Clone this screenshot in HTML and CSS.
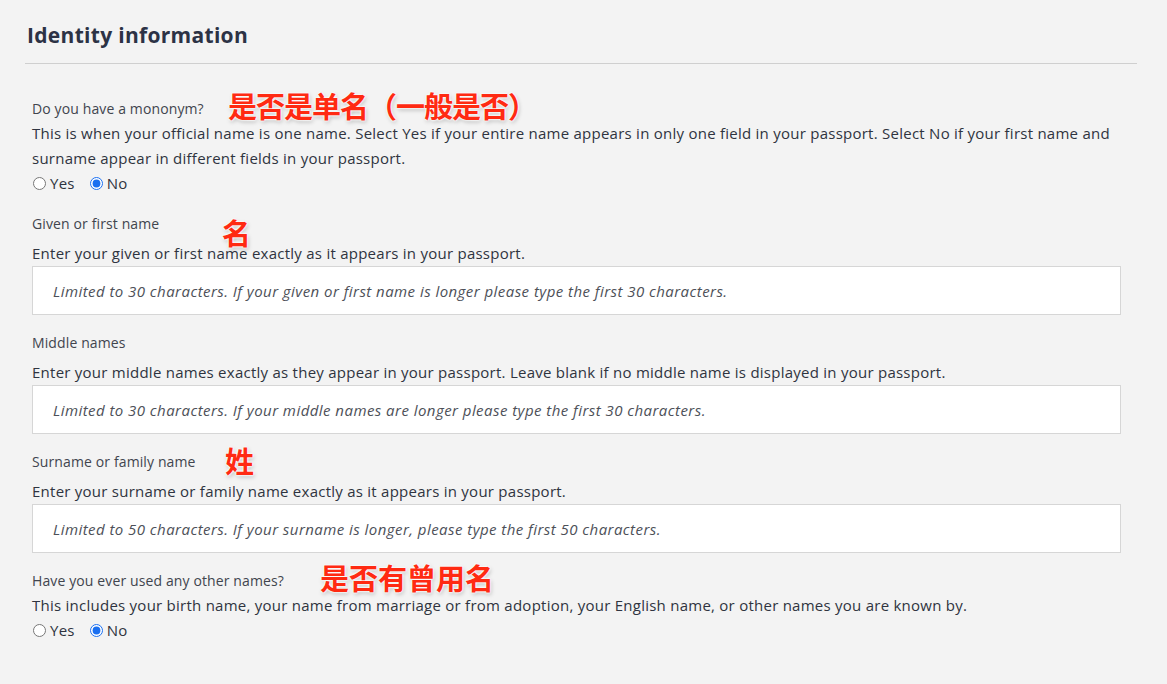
FILE: index.html
```html
<!DOCTYPE html>
<html lang="en">
<head>
<meta charset="utf-8">
<title>Identity information</title>
<link rel="stylesheet" href="styles.css">
</head>
<body>
<section class="panel">
  <h2 class="panel-title">Identity information</h2>
  <div class="fields">
    <div class="group">
      <div class="label">Do you have a mononym?</div>
      <span class="note note-1">是否是单名（一般是否）</span>
      <p class="desc">This is when your official name is one name. Select Yes if your entire name appears in only one field in your passport. Select No if your first name and surname appear in different fields in your passport.</p>
      <div class="radios">
        <label class="radio"><input type="radio" name="mono"> Yes</label>
        <label class="radio"><input type="radio" name="mono" checked> No</label>
      </div>
    </div>
    <div class="group">
      <div class="label label-gap">Given or first name</div>
      <span class="note note-2">名</span>
      <p class="desc">Enter your given or first name exactly as it appears in your passport.</p>
      <input class="text" type="text" placeholder="Limited to 30 characters. If your given or first name is longer please type the first 30 characters.">
    </div>
    <div class="group">
      <div class="label label-gap">Middle names</div>
      <p class="desc">Enter your middle names exactly as they appear in your passport. Leave blank if no middle name is displayed in your passport.</p>
      <input class="text" type="text" placeholder="Limited to 30 characters. If your middle names are longer please type the first 30 characters.">
    </div>
    <div class="group">
      <div class="label label-gap">Surname or family name</div>
      <span class="note note-3">姓</span>
      <p class="desc">Enter your surname or family name exactly as it appears in your passport.</p>
      <input class="text" type="text" placeholder="Limited to 50 characters. If your surname is longer, please type the first 50 characters.">
    </div>
    <div class="group">
      <div class="label">Have you ever used any other names?</div>
      <span class="note note-4">是否有曾用名</span>
      <p class="desc">This includes your birth name, your name from marriage or from adoption, your English name, or other names you are known by.</p>
      <div class="radios">
        <label class="radio"><input type="radio" name="other"> Yes</label>
        <label class="radio"><input type="radio" name="other" checked> No</label>
      </div>
    </div>
  </div>
</section>
</body>
</html>
```
FILE: styles.css
```css
html, body {
  margin: 0;
  padding: 0;
  background: #f3f3f3;
}
body {
  font-family: "Open Sans", "Noto Sans", "Noto Sans CJK SC", sans-serif;
  color: #30343f;
  width: 1167px;
  height: 684px;
  overflow: hidden;
}
.panel {
  margin-left: 25px;
  width: 1112px;
  padding-top: 20px;
}
.panel-title {
  margin: 0;
  padding: 0 0 13px 2px;
  font-size: 21px;
  line-height: 30px;
  font-weight: 700;
  color: #2c3245;
  letter-spacing: 0.3px;
  border-bottom: 1px solid #cfcfcf;
}
.fields {
  padding: 32px 16px 0 7px;
  display: flex;
  flex-direction: column;
  gap: 15px;
}
.group {
  position: relative;
  display: flex;
  flex-direction: column;
}
.label {
  font-size: 14px;
  line-height: 25px;
  color: #41454e;
  letter-spacing: 0.12px;
}
.label-gap {
  margin-bottom: 5px;
}
.desc {
  margin: 0;
  font-size: 15px;
  line-height: 25px;
  color: #2f3440;
  letter-spacing: 0.25px;
}
.radios {
  display: flex;
  gap: 14px;
  font-size: 15px;
  line-height: 25px;
  color: #2f3440;
  letter-spacing: 0.25px;
}
.radio {
  display: flex;
  align-items: center;
  gap: 4px;
}
.radio input {
  margin: 0 0 0 1px;
  width: 13px;
  height: 13px;
  accent-color: #1a6ff0;
}
.text {
  box-sizing: border-box;
  height: 49px;
  width: 100%;
  margin: 0;
  border: 1px solid #d6d6d6;
  background: #fff;
  padding: 0 20px;
  font-family: "Open Sans", sans-serif;
  font-size: 15px;
  outline: none;
}
.text::placeholder {
  font-style: italic;
  color: #4d5058;
  letter-spacing: 0.45px;
}
.note {
  position: absolute;
  font-family: "Noto Sans CJK SC", sans-serif;
  font-weight: 700;
  font-size: 29px;
  line-height: 32px;
  color: #ff2a12;
  white-space: nowrap;
  letter-spacing: 0;
  text-shadow: 0 0 2px #fff, 0 0 2px #fff, 0 0 3px #fff, 1px 2px 4px rgba(0,0,0,0.25);
}
.note-1 { left: 196px; top: -7px; letter-spacing: -1px; }
.note-2 { left: 190px; top: 5px; }
.note-3 { left: 193px; top: -5px; }
.note-4 { left: 288px; top: -7px; }
```
